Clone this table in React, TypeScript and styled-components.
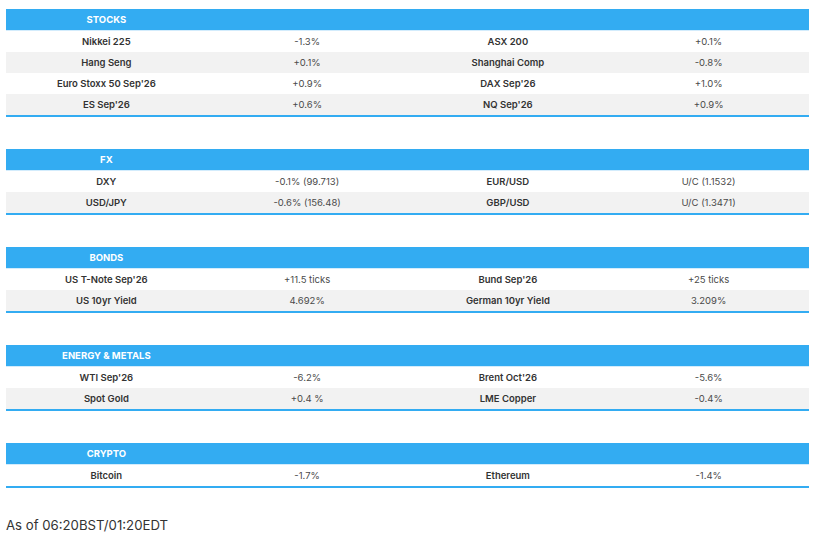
import styled, { createGlobalStyle } from "styled-components";

type Row = [string, string, string, string];

interface Section {
  title: string;
  rows: Row[];
}

const sections: Section[] = [
  {
    title: "STOCKS",
    rows: [
      ["Nikkei 225", "-1.3%", "ASX 200", "+0.1%"],
      ["Hang Seng", "+0.1%", "Shanghai Comp", "-0.8%"],
      ["Euro Stoxx 50 Sep'26", "+0.9%", "DAX Sep'26", "+1.0%"],
      ["ES Sep'26", "+0.6%", "NQ Sep'26", "+0.9%"],
    ],
  },
  {
    title: "FX",
    rows: [
      ["DXY", "-0.1% (99.713)", "EUR/USD", "U/C (1.1532)"],
      ["USD/JPY", "-0.6% (156.48)", "GBP/USD", "U/C (1.3471)"],
    ],
  },
  {
    title: "BONDS",
    rows: [
      ["US T-Note Sep'26", "+11.5 ticks", "Bund Sep'26", "+25 ticks"],
      ["US 10yr Yield", "4.692%", "German 10yr Yield", "3.209%"],
    ],
  },
  {
    title: "ENERGY & METALS",
    rows: [
      ["WTI Sep'26", "-6.2%", "Brent Oct'26", "-5.6%"],
      ["Spot Gold", "+0.4 %", "LME Copper", "-0.4%"],
    ],
  },
  {
    title: "CRYPTO",
    rows: [["Bitcoin", "-1.7%", "Ethereum", "-1.4%"]],
  },
];

const GlobalStyle = createGlobalStyle`
  body {
    margin: 0;
    background: #ffffff;
    font-family: Inter, "Liberation Sans", sans-serif;
  }
`;

const Page = styled.div`
  width: 803px;
  padding: 9px 10px 0 6px;
  display: flex;
  flex-direction: column;
  gap: 32px;
`;

const Table = styled.div`
  display: flex;
  flex-direction: column;
  border-bottom: 2px solid #33acf2;
`;

const HeaderRow = styled.div`
  display: grid;
  grid-template-columns: repeat(4, 1fr);
  height: 21px;
  background: #33acf2;
  border-bottom: 1px solid #d3ecfc;
`;

const HeaderCell = styled.div`
  display: flex;
  align-items: center;
  justify-content: center;
  color: #ffffff;
  font-size: 9.5px;
  font-weight: 700;
`;

const DataRow = styled.div<{ $alt: boolean }>`
  display: grid;
  grid-template-columns: repeat(4, 1fr);
  height: 21px;
  background: ${(p) => (p.$alt ? "#f2f2f2" : "#ffffff")};
`;

const Cell = styled.div<{ $label?: boolean }>`
  display: flex;
  align-items: center;
  justify-content: center;
  padding-bottom: 1px;
  font-size: 9.5px;
  font-weight: ${(p) => (p.$label ? 600 : 400)};
  color: ${(p) => (p.$label ? "#333333" : "#4a4a4a")};
  white-space: nowrap;
`;

const Footer = styled.div`
  margin-top: -3px;
  font-size: 13.2px;
  color: #333333;
`;

const App = () => {
  return (
    <>
      <GlobalStyle />
      <Page>
        {sections.map((section) => (
          <Table key={section.title}>
            <HeaderRow>
              <HeaderCell>{section.title}</HeaderCell>
            </HeaderRow>
            {section.rows.map((row, i) => (
              <DataRow key={row[0]} $alt={i % 2 === 1}>
                <Cell $label>{row[0]}</Cell>
                <Cell>{row[1]}</Cell>
                <Cell $label>{row[2]}</Cell>
                <Cell>{row[3]}</Cell>
              </DataRow>
            ))}
          </Table>
        ))}
        <Footer>As of 06:20BST/01:20EDT</Footer>
      </Page>
    </>
  );
};

export default App;
